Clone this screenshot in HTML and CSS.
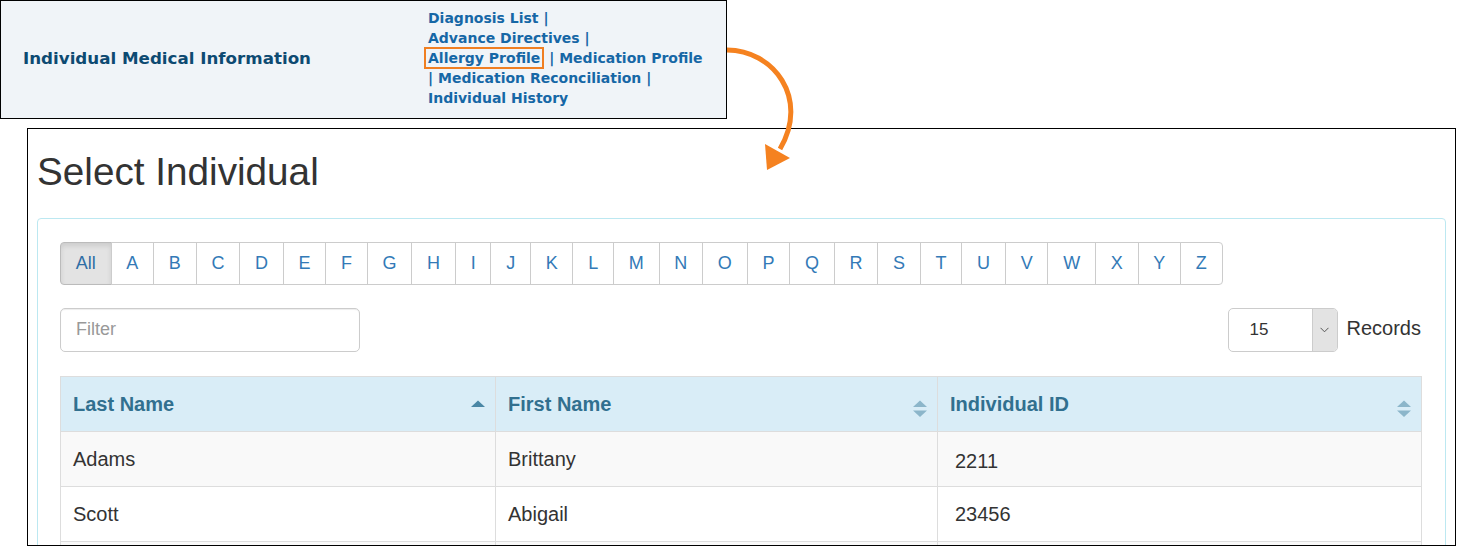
FILE: index.html
```html
<!DOCTYPE html>
<html lang="en">
<head>
    <meta charset="UTF-8">
    <title>Select Individual</title>
    <link rel="stylesheet" href="styles.css">
</head>
<body>
<div class="page">
    <div class="med-info">
        <div class="med-title">Individual Medical Information</div>
        <div class="med-links">
            <a href="#">Diagnosis List</a> |<br>
            <a href="#">Advance Directives</a> |<br>
            <a href="#" class="hilite">Allergy Profile</a> | <a href="#">Medication Profile</a><br>
            | <a href="#">Medication Reconciliation</a> |<br>
            <a href="#">Individual History</a>
        </div>
    </div>

    <div class="select-box">
        <h1>Select Individual</h1>
        <div class="panel">
            <div class="alpha">
                <button class="active">All</button>
                <button>A</button><button>B</button><button>C</button><button>D</button>
                <button>E</button><button>F</button><button>G</button><button>H</button>
                <button>I</button><button>J</button><button>K</button><button>L</button>
                <button>M</button><button>N</button><button>O</button><button>P</button>
                <button>Q</button><button>R</button><button>S</button><button>T</button>
                <button>U</button><button>V</button><button>W</button><button>X</button>
                <button>Y</button><button>Z</button>
            </div>

            <div class="tools">
                <input type="text" class="filter" placeholder="Filter">
                <div class="records">
                    <div class="select">
                        <span class="val">15</span>
                        <span class="caret">
                            <svg width="9" height="6" viewBox="0 0 9 6"><polyline points="0.5,0.8 4.5,4.8 8.5,0.8" fill="none" stroke="#555" stroke-width="1"/></svg>
                        </span>
                    </div>
                    <span class="rec-label">Records</span>
                </div>
            </div>

            <table>
                <colgroup>
                    <col class="c1"><col class="c2"><col class="c3">
                </colgroup>
                <thead>
                    <tr>
                        <th>Last Name
                            <svg class="sort" viewBox="0 0 14 28"><polygon points="0,17 7,10.5 14,17" fill="#4a87a5"/></svg>
                        </th>
                        <th>First Name
                            <svg class="sort" viewBox="0 0 14 28"><polygon points="0,17 7,10.5 14,17" fill="#8cb6ca"/><polygon points="0,20.5 14,20.5 7,27" fill="#8cb6ca"/></svg>
                        </th>
                        <th>Individual ID
                            <svg class="sort" viewBox="0 0 14 28"><polygon points="0,17 7,10.5 14,17" fill="#8cb6ca"/><polygon points="0,20.5 14,20.5 7,27" fill="#8cb6ca"/></svg>
                        </th>
                    </tr>
                </thead>
                <tbody>
                    <tr><td>Adams</td><td>Brittany</td><td class="id low">2211</td></tr>
                    <tr><td>Scott</td><td>Abigail</td><td class="id">23456</td></tr>
                    <tr><td>&nbsp;</td><td>&nbsp;</td><td class="id">&nbsp;</td></tr>
                </tbody>
            </table>
        </div>
    </div>

    <!-- callout arrow from the menu to the page -->
    <svg class="arrow" width="820" height="180" viewBox="0 0 820 180">
        <path d="M727,50 C773,50 810,98 780,149" fill="none" stroke="#f58220" stroke-width="5"/>
        <polygon points="765,144 790,158 767,170" fill="#f58220"/>
    </svg>
</div>
</body>
</html>
```

FILE: styles.css
```css
body {
    margin: 0;
    font-family: "Liberation Sans", Arial, sans-serif;
    background-color: #fff;
}

.page {
    position: relative;
    height: 552px;
    overflow: hidden;
}

/* top menu box */
.med-info {
    display: flex;
    width: 727px;
    height: 119px;
    box-sizing: border-box;
    border: 1px solid #000;
    background-color: #f0f4f8;
    font-family: "DejaVu Sans", Verdana, sans-serif;
    font-weight: bold;
}

.med-title {
    width: 405px;
    padding-left: 22px;
    padding-bottom: 3px;
    align-self: center;
    font-size: 16.7px;
    color: #0d4a72;
}

.med-links {
    padding-top: 7px;
    font-size: 14px;
    line-height: 20px;
    color: #1667a6;
    white-space: nowrap;
}

.med-links a {
    color: inherit;
    text-decoration: none;
}

.hilite {
    border: 2px solid #f07f22;
    padding: 1px 2px;
    margin-left: -4px;
}

.arrow {
    position: absolute;
    left: 0;
    top: 0;
    pointer-events: none;
}

/* select individual */
.select-box {
    margin: 9px 0 0 27px;
    width: 1429px;
    height: 418px;
    box-sizing: border-box;
    border: 1px solid #000;
    padding: 0 9px;
    overflow: hidden;
}

h1 {
    margin: 22px 0 24px;
    font-size: 38.7px;
    font-weight: normal;
    line-height: 1.1;
    color: #333;
}

.panel {
    border: 1px solid #bce8f1;
    border-radius: 4px;
    padding: 23px 24px 23px 22px;
}

.alpha {
    display: flex;
}

.alpha button {
    font-family: "Liberation Sans", Arial, sans-serif;
    font-size: 18px;
    line-height: 25px;
    padding: 8px 14.78px;
    margin-left: -1px;
    border: 1px solid #ccc;
    background-color: #fff;
    color: #337ab7;
    cursor: pointer;
}

.alpha button:first-child {
    margin-left: 0;
    border-radius: 4px 0 0 4px;
}

.alpha button:last-child {
    border-radius: 0 4px 4px 0;
}

.alpha button.active {
    background-color: #e3e3e3;
    border-color: #bbb;
    color: #2f6ea5;
    box-shadow: inset 0 3px 5px rgba(0, 0, 0, 0.1);
}

.tools {
    display: flex;
    justify-content: space-between;
    align-items: center;
    margin: 23px 0 24px;
}

.filter {
    width: 300px;
    height: 44px;
    box-sizing: border-box;
    border: 1px solid #ccc;
    border-radius: 5px;
    padding: 0 15px;
    font-family: "Liberation Sans", Arial, sans-serif;
    font-size: 18px;
    color: #555;
    box-shadow: inset 0 1px 1px rgba(0, 0, 0, 0.075);
}

.filter::placeholder {
    color: #999;
}

.records {
    display: flex;
    align-items: center;
    gap: 9px;
    font-size: 20px;
    color: #333;
}

.rec-label {
    margin-bottom: 3px;
}

.select {
    display: flex;
    width: 110px;
    height: 44px;
    box-sizing: border-box;
    border: 1px solid #ccc;
    border-radius: 5px;
    overflow: hidden;
}

.select .val {
    flex: 1;
    padding-left: 21px;
    line-height: 42px;
    font-size: 17px;
}

.select .caret {
    width: 24px;
    display: flex;
    align-items: center;
    justify-content: center;
    background-color: #e3e3e3;
    border-left: 1px solid #ccc;
}

/* table */
table {
    width: 1361px;
    table-layout: fixed;
    border-collapse: collapse;
    font-size: 20px;
    color: #333;
}

.c1 { width: 435px; }
.c2 { width: 442px; }
.c3 { width: 484px; }

th, td {
    border: 1px solid #ddd;
    padding: 13px 12px;
    line-height: 28px;
    text-align: left;
}

th {
    background-color: #d9edf7;
    color: #31708f;
    padding-right: 10px;
}

.sort {
    float: right;
    width: 14px;
    height: 28px;
}

tbody tr:nth-child(odd) td {
    background-color: #f9f9f9;
}

td.id {
    padding-left: 17px;
}

td.low {
    padding-top: 15px;
    padding-bottom: 11px;
}
```
